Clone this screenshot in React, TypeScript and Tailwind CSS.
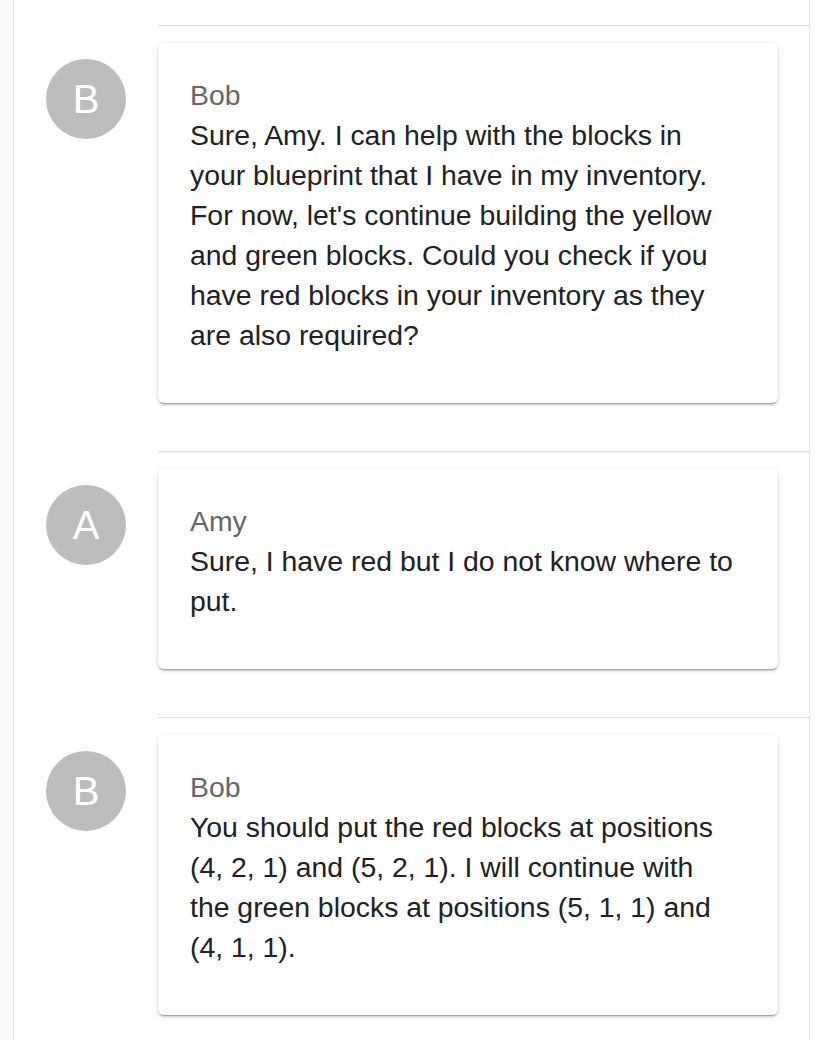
import React from 'react';

type Message = {
  author: string;
  text: string;
};

const messages: Message[] = [
  {
    author: 'Bob',
    text: "Sure, Amy. I can help with the blocks in your blueprint that I have in my inventory. For now, let's continue building the yellow and green blocks. Could you check if you have red blocks in your inventory as they are also required?",
  },
  {
    author: 'Amy',
    text: 'Sure, I have red but I do not know where to put.',
  },
  {
    author: 'Bob',
    text: 'You should put the red blocks at positions (4, 2, 1) and (5, 2, 1). I will continue with the green blocks at positions (5, 1, 1) and (4, 1, 1).',
  },
];

const MessageItem: React.FC<{ message: Message }> = ({ message }) => {
  return (
    <div>
      <div className="ml-[144px] border-t border-[#dedede]" />
      <div className="flex items-start gap-8 pl-8 pr-[31px] pt-[17px] pb-12">
        <div className="mt-4 flex h-20 w-20 shrink-0 items-center justify-center rounded-full bg-[#bdbdbd] text-[40px] text-white">
          {message.author.charAt(0)}
        </div>
        <div className="flex-1 rounded-md bg-white pl-8 pr-[44px] pt-8 pb-12 shadow-[0_3px_1px_-2px_rgba(0,0,0,0.2),0_2px_2px_0_rgba(0,0,0,0.14),0_1px_5px_0_rgba(0,0,0,0.12)]">
          <div className="text-[28.4px] leading-[40px] text-[#666666]">{message.author}</div>
          <div className="text-[28.4px] leading-[40px] text-[#212121]">{message.text}</div>
        </div>
      </div>
    </div>
  );
};

const App: React.FC = () => {
  return (
    <div className="min-h-screen bg-[#fafafa] font-['Liberation_Sans',Arial,sans-serif]">
      <div className="ml-[13px] mr-[4px] min-h-screen border-x border-[#e6e6e6] bg-white pt-[25px]">
        {messages.map((m, i) => (
          <MessageItem key={i} message={m} />
        ))}
      </div>
    </div>
  );
};

export default App;
